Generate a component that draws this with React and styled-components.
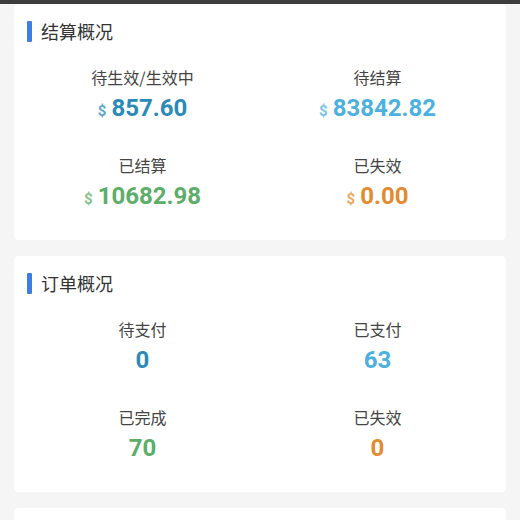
import React from "react";
import styled, { createGlobalStyle } from "styled-components";

const GlobalStyle = createGlobalStyle`
  html, body {
    margin: 0;
    padding: 0;
    background: #f5f5f5;
    font-family: "Noto Sans CJK SC", "Noto Sans", sans-serif;
  }
`;

const Page = styled.div`
  width: 520px;
  min-height: 520px;
  overflow: hidden;
  background: #f5f5f5;
`;

const TopBar = styled.div`
  height: 4px;
  background: #3d3d3d;
`;

const List = styled.div`
  display: flex;
  flex-direction: column;
  gap: 16px;
  padding: 0 14px;
`;

const Card = styled.section`
  background: #ffffff;
  border-radius: 4px;
  padding: 16px 11px 29px;
  min-height: ${(p) => p.$min || 0}px;
  box-sizing: border-box;
`;

const Title = styled.div`
  display: flex;
  align-items: center;
  gap: 9px;
  height: 22px;
  padding-left: 2px;
  font-size: 18px;
  color: #333;
  &::before {
    content: "";
    width: 5px;
    height: 21px;
    border-radius: 1px;
    background: #3d7fe0;
  }
`;

const Grid = styled.div`
  display: grid;
  grid-template-columns: 1fr 1fr;
  row-gap: 31px;
  margin-top: 24px;
`;

const Item = styled.div`
  display: flex;
  flex-direction: column;
  align-items: center;
  gap: 5px;
`;

const Label = styled.div`
  font-size: 16px;
  line-height: 22px;
  color: #444;
`;

const Value = styled.div`
  display: flex;
  align-items: baseline;
  gap: 5px;
  height: 30px;
  line-height: 30px;
  font-family: Roboto, "Noto Sans", sans-serif;
  font-weight: 700;
  font-size: 24px;
  color: ${(p) => p.$color};
`;

const Currency = styled.span`
  font-size: 15px;
  font-weight: 700;
  opacity: 0.75;
`;

const colors = {
  blue: "#2b8ab7",
  sky: "#4db1e0",
  green: "#5cae69",
  orange: "#e38b2f",
};

const settle = [
  { label: "待生效/生效中", value: "857.60", color: colors.blue },
  { label: "待结算", value: "83842.82", color: colors.sky },
  { label: "已结算", value: "10682.98", color: colors.green },
  { label: "已失效", value: "0.00", color: colors.orange },
];

const orders = [
  { label: "待支付", value: "0", color: colors.blue },
  { label: "已支付", value: "63", color: colors.sky },
  { label: "已完成", value: "70", color: colors.green },
  { label: "已失效", value: "0", color: colors.orange },
];

function Overview({ title, items, money }) {
  return (
    <Card>
      <Title>{title}</Title>
      <Grid>
        {items.map((it) => (
          <Item key={it.label}>
            <Label>{it.label}</Label>
            <Value $color={it.color}>
              {money && <Currency>$</Currency>}
              {it.value}
            </Value>
          </Item>
        ))}
      </Grid>
    </Card>
  );
}

export default function App() {
  return (
    <Page>
      <GlobalStyle />
      <TopBar />
      <List>
        <Overview title="结算概况" items={settle} money />
        <Overview title="订单概况" items={orders} />
        <Card $min={60} />
      </List>
    </Page>
  );
}
